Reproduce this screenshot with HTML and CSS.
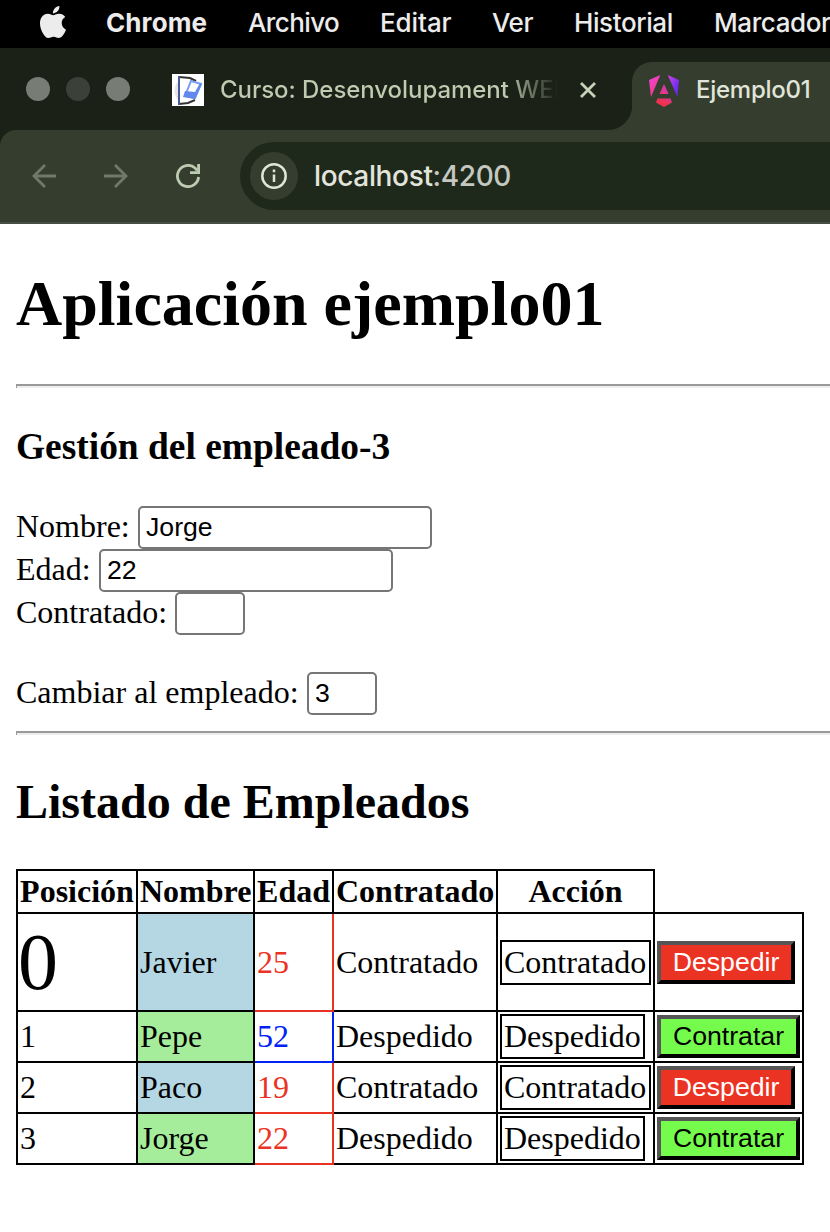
FILE: index.html
```html
<!DOCTYPE html>
<html lang="es">
<head>
<meta charset="utf-8">
<title>Ejemplo01</title>
<link rel="stylesheet" href="styles.css">
</head>
<body>
<header class="menubar">
  <svg class="apple" viewBox="0 0 24 24"><path d="M12.152 6.896c-.948 0-2.415-1.078-3.96-1.04-2.04.027-3.91 1.183-4.961 3.014-2.117 3.675-.546 9.103 1.519 12.09 1.013 1.454 2.208 3.09 3.792 3.039 1.52-.065 2.09-.987 3.935-.987 1.831 0 2.35.987 3.96.948 1.637-.026 2.676-1.48 3.676-2.948 1.156-1.688 1.636-3.325 1.662-3.415-.039-.013-3.182-1.221-3.22-4.857-.026-3.04 2.48-4.494 2.597-4.559-1.429-2.09-3.623-2.324-4.39-2.376-2-.156-3.675 1.09-4.61 1.09zM15.53 3.83c.843-1.012 1.4-2.427 1.245-3.83-1.207.052-2.662.805-3.532 1.818-.78.896-1.454 2.338-1.273 3.714 1.338.104 2.715-.688 3.559-1.701"/></svg>
  <span class="menu m-app">Chrome</span>
  <span class="menu m-file">Archivo</span>
  <span class="menu m-edit">Editar</span>
  <span class="menu m-view">Ver</span>
  <span class="menu m-history">Historial</span>
  <span class="menu m-marks">Marcadores</span>
</header>
<div class="tabstrip">
  <div class="tab-idle">
    <div class="lights"><i></i><i class="dim"></i><i></i></div>
    <svg class="favicon" viewBox="0 0 32 32"><path fill="#fff" d="M0 0h32v32H0z"/><path fill="#e6e6e6" d="M6 8C1 12 2 22 6 26z"/><path fill="none" stroke="#333" stroke-width="2" d="M7 3l11 1 6 3M7 30l9-1 7-3"/><path stroke="#465a9a" stroke-width="2" d="M7 2v29"/><path fill="#fff" stroke="#7d9df0" stroke-width="2" d="M19 7l10 3-6 14-10-2z"/><path fill="#6288ee" d="M13 17l10 1 5-9 2 1-7 15-12-2z"/></svg>
    <span class="tab-title faded">Curso: Desenvolupament WEB</span>
    <svg class="close" viewBox="0 0 16 16"><path d="M1 1l14 14M15 1L1 15"/></svg>
  </div>
  <div class="tab-active">
    <svg class="angular" viewBox="0 0 30 32"><defs><linearGradient id="a" x1="0" y1="0" x2=".5" y2="1"><stop stop-color="#f044e0"/><stop offset="1" stop-color="#f03a80"/></linearGradient><linearGradient id="b" x1="0" y1="0" x2="1" y2="1"><stop stop-color="#d944e8"/><stop offset=".6" stop-color="#7a30f0"/><stop offset="1" stop-color="#6020e0"/></linearGradient><linearGradient id="c" x1="1" y1="0" x2="0" y2="1"><stop stop-color="#c93cd0"/><stop offset="1" stop-color="#f03370"/></linearGradient><linearGradient id="d" x1="1" y1="0" x2="0" y2="1"><stop stop-color="#d8359a"/><stop offset=".5" stop-color="#ee3350"/></linearGradient></defs><path fill="url(#a)" d="M0 5L11.300 0 2 22z"/><path fill="url(#b)" d="M18.700 0L30 5 28.500 22z"/><path fill="url(#c)" d="M15 9l4.500 10h-9z"/><path fill="url(#d)" d="M8.500 23.500h13l1.500 4L15 32l-8-4.500z"/></svg>
    <span class="tab-title bright">Ejemplo01</span>
  </div>
</div>
<div class="toolbar">
  <svg class="nav" viewBox="0 0 24 24"><path d="M24 12H2M13 1L2 12l11 11"/></svg>
  <svg class="nav" viewBox="0 0 24 24"><path d="M0 12h22M11 1l11 11-11 11"/></svg>
  <svg class="nav reload" viewBox="0 0 24 24"><path d="M22.600 13A10.600 10.600 0 1 1 19 4L21 6.500M22.600 0v8.600H14"/></svg>
  <div class="address">
    <div class="info"><svg viewBox="0 0 28 28"><circle cx="14" cy="14" r="11.700"/><path d="M14 12.500v7.500M14 7.500v2.800"/></svg></div>
    <span class="url">localhost<span class="port">:4200</span></span>
  </div>
</div>
<main class="page">
  <h1>Aplicación ejemplo01</h1>
  <hr>
  <h3>Gestión del empleado-3</h3>
  <form class="form">
    <label class="row"><span class="l-name">Nombre:</span><input class="wide" value="Jorge"></label>
    <label class="row"><span class="l-age">Edad:</span><input class="wide" value="22"></label>
    <label class="row"><span class="l-hired">Contratado:</span><input class="narrow"></label>
    <label class="row change"><span class="l-change">Cambiar al empleado:</span><input class="narrow" value="3"></label>
  </form>
  <hr>
  <h2>Listado de Empleados</h2>
  <table>
    <colgroup><col class="c1"><col class="c2"><col class="c3"><col class="c4"><col class="c5"><col class="c6"></colgroup>
    <tr class="head"><th>Posición</th><th>Nombre</th><th>Edad</th><th>Contratado</th><th>Acción</th></tr>
    <tr class="first"><td class="big">0</td><td class="blue-bg">Javier</td><td class="red">25</td><td>Contratado</td><td><span class="state">Contratado</span></td><td><button class="fire">Despedir</button></td></tr>
    <tr><td>1</td><td class="green-bg">Pepe</td><td class="blue">52</td><td>Despedido</td><td><span class="state">Despedido</span></td><td><button class="hire">Contratar</button></td></tr>
    <tr><td>2</td><td class="blue-bg">Paco</td><td class="red">19</td><td>Contratado</td><td><span class="state">Contratado</span></td><td><button class="fire">Despedir</button></td></tr>
    <tr><td>3</td><td class="green-bg">Jorge</td><td class="red">22</td><td>Despedido</td><td><span class="state">Despedido</span></td><td><button class="hire">Contratar</button></td></tr>
  </table>
</main>
</body>
</html>
```
FILE: styles.css
```css
* { box-sizing: border-box; }
html, body { margin: 0; overflow: hidden; background: #fff; }
body { width: 830px; height: 1232px; font-family: "Liberation Serif", serif; font-size: 32px; color: #000; }
svg { display: block; flex: none; }

.menubar { display: flex; height: 48px; background: #000; color: #ececec; padding-left: 37px; font: 500 26px/46px Inter, sans-serif; white-space: nowrap; }
.apple { width: 32px; height: 32px; margin: 6px 37px 0 0; fill: #ececec; }
.menu { flex: none; letter-spacing: -0.4px; }
.m-app { width: 142px; font-weight: 700; letter-spacing: 0.1px; }
.m-file { width: 132px; letter-spacing: -0.6px; }
.m-edit { width: 112px; letter-spacing: -0.1px; }
.m-view { width: 82px; }
.m-history { width: 140px; }

.tabstrip { display: flex; height: 82px; background: linear-gradient(#1b2117 62px, #353e2e 62px); }
.tab-idle { display: flex; align-items: center; width: 632px; height: 82px; background: #1b2117; border-bottom-right-radius: 24px; padding-left: 26px; }
.lights { display: flex; gap: 16px; width: 146px; }
.lights i { width: 24px; height: 24px; border-radius: 50%; background: #777c74; }
.lights .dim { background: #3b4138; }
.favicon { width: 32px; height: 32px; margin-top: 2px; }
.tab-title { font: 500 24px/36px Inter, sans-serif; white-space: nowrap; }
.faded { width: 338px; margin: 2px 0 0 16px; letter-spacing: -0.05px; overflow: hidden; color: transparent; background: linear-gradient(90deg, #c0cbb1 285px, #1b2117 338px); background-clip: text; -webkit-background-clip: text; }
.close { width: 16px; height: 16px; margin: 2px 0 0 22px; fill: none; stroke: #c7d2b9; stroke-width: 2.8; }
.tab-active { display: flex; flex: 1; align-items: center; height: 68px; margin-top: 14px; padding: 0 0 13px 17px; background: #353e2e; border-top-left-radius: 20px; }
.angular { width: 30px; height: 32px; margin-top: 2px; }
.bright { margin-left: 17px; color: #e1e5d9; letter-spacing: -0.25px; }

.toolbar { display: flex; height: 94px; padding-left: 32px; border-bottom: 2px solid #484d43; border-top-left-radius: 16px; background: #353e2e; box-shadow: -16px -16px 0 #1b2117; clip-path: inset(0); }
.nav { width: 24px; height: 24px; margin: 34px 48px 0 0; fill: none; stroke: #717a69; stroke-width: 2.8; }
.reload { width: 24px; margin-right: 40px; stroke: #bdcbb1; stroke-width: 2.8; }
.address { display: flex; flex: 1; align-items: center; height: 68px; margin-top: 12px; padding-left: 10px; border-radius: 34px 0 0 34px; background: #1f291b; }
.info { display: flex; width: 48px; height: 48px; align-items: center; justify-content: center; border-radius: 50%; background: #353e2e; }
.info svg { width: 28px; height: 28px; fill: none; stroke: #e1e5d9; stroke-width: 2.5; }
.url { margin-left: 16px; font: 500 28px/40px Inter, sans-serif; letter-spacing: -0.35px; color: #e3e5dc; }
.port { color: #c5c8c0; }

.page { padding: 43px 0 0 16px; }
h1, h2, h3 { margin: 0; white-space: nowrap; }
h1 { height: 117px; font-size: 64px; line-height: 74px; }
h3 { height: 81px; margin-top: 37px; font-size: 37.44px; line-height: 43px; }
h2 { height: 95px; margin-top: 39px; font-size: 48px; line-height: 55px; }
hr { height: 4px; margin: 0; border: 0; border-top: 2px solid #9a9a9a; border-left: 1px solid #9a9a9a; background: #eee; }
.form { height: 225px; }
.row { display: flex; height: 43px; line-height: 37px; white-space: nowrap; }
.row span { flex: none; margin-top: 2px; }
.change { margin-top: 37px; }
.l-name { width: 122px; }
.l-age { width: 83px; }
.l-hired { width: 159px; }
.l-change { width: 291px; }
input { height: 43px; margin: 0; padding: 2px 5px 2px 6px; border: 2px solid #767676; border-radius: 5px; background: #fff; color: #000; font: 26.67px "Liberation Sans", sans-serif; }
.wide { width: 294px; }
.narrow { width: 70px; }

table { width: 788px; table-layout: fixed; border-collapse: collapse; line-height: 37px; }
.c1 { width: 120px; } .c2 { width: 117px; } .c3 { width: 79px; } .c4 { width: 164px; } .c5 { width: 157px; } .c6 { width: 149px; }
tr { height: 51px; }
.head { height: 43px; }
.first { height: 98px; }
th, td { padding: 0 2px; border: 2px solid #000; white-space: nowrap; text-align: left; vertical-align: middle; }
th { text-align: center; }
.big { padding-left: 0; font-size: 80px; line-height: 92px; }
.blue-bg { background: #b5d6e3; }
.green-bg { background: #a6ed9b; }
.red { color: #eb3324; border-color: #eb3324; }
.blue { color: #0022f5; border-color: #0022f5; }
.state { display: block; width: fit-content; padding: 2px 2.4px 2px 2px; border: 2px solid #000; }
button { display: block; height: 43px; margin: 0; padding: 0; border: 4px solid; border-color: #555 #000 #000 #555; font: 26.67px/31px "Liberation Sans", sans-serif; }
.fire { width: 138px; background: #eb3324; color: #fff; }
.hire { width: 143px; background: #75fb4c; color: #000; }
```
